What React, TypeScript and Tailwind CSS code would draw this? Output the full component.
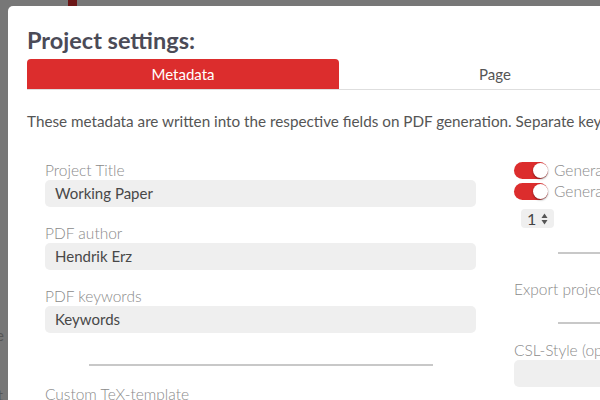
import React from 'react';

const Field: React.FC<{ label: string; value?: string }> = ({ label, value }) => (
  <div className="mb-[16px]">
    <div className="whitespace-nowrap text-[15.5px] leading-[20px] font-light text-[#8a8a8a]">{label}</div>
    <div className="h-[27px] rounded-[5px] bg-[#efefef] pl-[10px] text-[15px] leading-[27px] text-[#484848]">
      {value}
    </div>
  </div>
);

const Toggle: React.FC<{ label: string }> = ({ label }) => (
  <div className="flex h-[21px] items-center">
    <div className="relative h-[17px] w-[34px] rounded-full bg-[#dc2d2d]">
      <div className="absolute right-0 top-[1px] h-[15px] w-[15px] rounded-full bg-white shadow-[0_1px_2px_rgba(0,0,0,0.45)]" />
    </div>
    <span className="ml-[6px] whitespace-nowrap text-[15.5px] font-light text-[#888]">{label}</span>
  </div>
);

const App: React.FC = () => {
  return (
    <div className="relative h-[400px] w-[600px] overflow-hidden bg-[#777]" style={{ fontFamily: 'Lato, "Open Sans", sans-serif' }}>
      {/* stuff behind the backdrop */}
      <div className="absolute left-[68px] top-0 h-[8px] w-[9px] bg-[#6b1616]" />
      <span className="absolute left-[-4px] top-[324px] text-[15px] text-[#555]">e</span>
      <span className="absolute left-[-8px] top-[384px] text-[15px] text-[#555]">rt</span>

      {/* Modal */}
      <div className="absolute left-[8px] top-[6px] w-[1000px] rounded-[5px] bg-white px-[19px] pt-[20px] pb-10">
        <h1 className="text-[23.5px] font-bold leading-[28px] text-[#4b4b57]">Project settings:</h1>

        <div className="mt-[5px] flex border-b border-[#dedede]">
          <div className="h-[30px] w-[312px] rounded-t-[4px] bg-[#dc2d2d] text-center text-[15px] leading-[30px] text-white">
            Metadata
          </div>
          <div className="h-[30px] w-[312px] text-center text-[15px] leading-[30px] text-[#555]">Page</div>
        </div>

        <p className="mt-[21px] whitespace-nowrap text-[15.25px] leading-[20px] text-[#555]">
          These metadata are written into the respective fields on PDF generation. Separate keywords by commas.
        </p>

        <div className="mt-[29px] grid grid-cols-[431px_431px] gap-x-[38px] pl-[18px]">
          <div>
            <Field label="Project Title" value="Working Paper" />
            <Field label="PDF author" value="Hendrik Erz" />
            <Field label="PDF keywords" value="Keywords" />
            <hr className="mx-auto mt-[31px] w-[344px] border-t-2 border-[#c8c8c8]" />
            <div className="mt-[18px] text-[15.5px] leading-[20px] font-light text-[#8a8a8a]">Custom TeX-template</div>
          </div>

          <div>
            <Toggle label="Generate a title page" />
            <Toggle label="Generate a table of contents" />
            <div className="ml-[7px] mt-[7px] flex h-[19px] w-[33px] items-center rounded-[4px] bg-[#efefef] pl-[6px]">
              <span className="text-[16px] leading-none text-[#444]">1</span>
              <svg className="ml-[5px]" width="7" height="12" viewBox="0 0 7 12">
                <path d="M3.5 0.5 L6.5 5 L0.5 5 Z" fill="#555" />
                <path d="M3.5 11.5 L6.5 7 L0.5 7 Z" fill="#555" />
              </svg>
            </div>
            <hr className="mx-auto mt-[24px] w-[344px] border-t-2 border-[#c8c8c8]" />
            <div className="mt-[25px] whitespace-nowrap text-[15.5px] leading-[20px] font-light text-[#8a8a8a]">
              Export project to TeX
            </div>
            <hr className="mx-auto mt-[23px] w-[344px] border-t-2 border-[#c8c8c8]" />
            <div className="mt-[16px]">
              <Field label="CSL-Style (optional)" />
            </div>
          </div>
        </div>
      </div>
    </div>
  );
};

export default App;
